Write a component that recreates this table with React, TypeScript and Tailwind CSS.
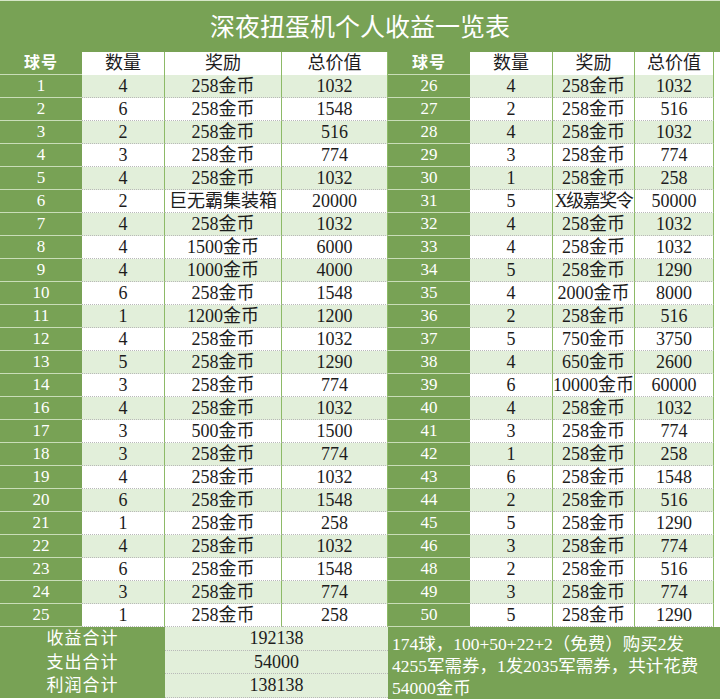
type Row = { no: number; qty: number; prize: string; total: number };

const left: Row[] = [
  { no: 1, qty: 4, prize: "258金币", total: 1032 },
  { no: 2, qty: 6, prize: "258金币", total: 1548 },
  { no: 3, qty: 2, prize: "258金币", total: 516 },
  { no: 4, qty: 3, prize: "258金币", total: 774 },
  { no: 5, qty: 4, prize: "258金币", total: 1032 },
  { no: 6, qty: 2, prize: "巨无霸集装箱", total: 20000 },
  { no: 7, qty: 4, prize: "258金币", total: 1032 },
  { no: 8, qty: 4, prize: "1500金币", total: 6000 },
  { no: 9, qty: 4, prize: "1000金币", total: 4000 },
  { no: 10, qty: 6, prize: "258金币", total: 1548 },
  { no: 11, qty: 1, prize: "1200金币", total: 1200 },
  { no: 12, qty: 4, prize: "258金币", total: 1032 },
  { no: 13, qty: 5, prize: "258金币", total: 1290 },
  { no: 14, qty: 3, prize: "258金币", total: 774 },
  { no: 16, qty: 4, prize: "258金币", total: 1032 },
  { no: 17, qty: 3, prize: "500金币", total: 1500 },
  { no: 18, qty: 3, prize: "258金币", total: 774 },
  { no: 19, qty: 4, prize: "258金币", total: 1032 },
  { no: 20, qty: 6, prize: "258金币", total: 1548 },
  { no: 21, qty: 1, prize: "258金币", total: 258 },
  { no: 22, qty: 4, prize: "258金币", total: 1032 },
  { no: 23, qty: 6, prize: "258金币", total: 1548 },
  { no: 24, qty: 3, prize: "258金币", total: 774 },
  { no: 25, qty: 1, prize: "258金币", total: 258 },
];

const right: Row[] = [
  { no: 26, qty: 4, prize: "258金币", total: 1032 },
  { no: 27, qty: 2, prize: "258金币", total: 516 },
  { no: 28, qty: 4, prize: "258金币", total: 1032 },
  { no: 29, qty: 3, prize: "258金币", total: 774 },
  { no: 30, qty: 1, prize: "258金币", total: 258 },
  { no: 31, qty: 5, prize: "X级嘉奖令", total: 50000 },
  { no: 32, qty: 4, prize: "258金币", total: 1032 },
  { no: 33, qty: 4, prize: "258金币", total: 1032 },
  { no: 34, qty: 5, prize: "258金币", total: 1290 },
  { no: 35, qty: 4, prize: "2000金币", total: 8000 },
  { no: 36, qty: 2, prize: "258金币", total: 516 },
  { no: 37, qty: 5, prize: "750金币", total: 3750 },
  { no: 38, qty: 4, prize: "650金币", total: 2600 },
  { no: 39, qty: 6, prize: "10000金币", total: 60000 },
  { no: 40, qty: 4, prize: "258金币", total: 1032 },
  { no: 41, qty: 3, prize: "258金币", total: 774 },
  { no: 42, qty: 1, prize: "258金币", total: 258 },
  { no: 43, qty: 6, prize: "258金币", total: 1548 },
  { no: 44, qty: 2, prize: "258金币", total: 516 },
  { no: 45, qty: 5, prize: "258金币", total: 1290 },
  { no: 46, qty: 3, prize: "258金币", total: 774 },
  { no: 48, qty: 2, prize: "258金币", total: 516 },
  { no: 49, qty: 3, prize: "258金币", total: 774 },
  { no: 50, qty: 5, prize: "258金币", total: 1290 },
];

const font = "font-['Liberation_Serif','Noto_Sans_CJK_SC',serif]";
const noCell = "flex shrink-0 items-center justify-center border-b border-[#c9ddb8] bg-[#78a255] text-[17px] text-white";
const dataCell =
  "flex shrink-0 items-center justify-center overflow-hidden whitespace-nowrap border-r border-b border-r-[#8dba67] border-b-[#b9b9b9] [border-bottom-style:dotted] text-[18px] text-[#1c1c1c]";

function Half({ row, shade, last }: { row: Row; shade: string; last?: boolean }) {
  // 奖励 text that is too long for the narrow right column gets squeezed a bit
  const tight = last && row.prize.length > 4 && !row.prize.includes("金币") ? "tracking-[-1.5px]" : "";
  return (
    <>
      <div className={`${noCell} w-[82px]`}>{row.no}</div>
      <div className={`${dataCell} ${shade} w-[83px]`}>{row.qty}</div>
      <div className={`${dataCell} ${shade} ${tight} ${last ? "w-[82px]" : "w-[117px]"}`}>{row.prize}</div>
      <div className={`${dataCell} ${shade} ${last ? "w-[79px]" : "w-[106px]"}`}>{row.total}</div>
    </>
  );
}

function HeadHalf({ last }: { last?: boolean }) {
  const head = "flex shrink-0 items-center justify-center border-r border-[#8dba67] bg-white text-[18px] text-[#1c1c1c]";
  return (
    <>
      <div className="flex w-[82px] shrink-0 items-center justify-center border-b border-[#c9ddb8] bg-[#78a255] text-[16px] font-bold tracking-[1px] text-white">
        球号
      </div>
      <div className={`${head} w-[83px]`}>数量</div>
      <div className={`${head} ${last ? "w-[82px]" : "w-[117px]"}`}>奖励</div>
      <div className={`${head} ${last ? "w-[79px]" : "w-[106px]"}`}>总价值</div>
    </>
  );
}

export default function App() {
  const sums = [
    { label: "收益合计", value: "192138", h: "h-[24px]" },
    { label: "支出合计", value: "54000", h: "h-[23px]" },
    { label: "利润合计", value: "138138", h: "h-[24px]" },
  ];

  return (
    <div className={`h-[699px] w-[720px] overflow-hidden bg-white ${font}`}>
      <div className="flex h-[52px] items-center justify-center border-t border-[#d6e6c8] bg-[#78a255] pt-[2px] text-[25px] text-white">
        深夜扭蛋机个人收益一览表
      </div>

      <div className="flex h-[23px]">
        <HeadHalf />
        <HeadHalf last />
        <div className="w-[6px] bg-white" />
      </div>

      {left.map((row, i) => {
        const shade = i % 2 === 0 ? "bg-[#e2efda]" : "bg-white";
        return (
          <div key={row.no} className="flex h-[23px]">
            <Half row={row} shade={shade} />
            <Half row={right[i]} shade={shade} last />
            <div className="w-[6px] bg-white" />
          </div>
        );
      })}

      <div className="flex">
        <div className="flex w-[388px] flex-col">
          {sums.map((s) => (
            <div key={s.label} className={`flex ${s.h}`}>
              <div className="flex w-[165px] items-center justify-center bg-[#78a255] text-[17px] tracking-[1px] text-white">
                {s.label}
              </div>
              <div className="flex w-[223px] items-center justify-center border-b border-[#b9b9b9] border-dotted bg-[#e2efda] text-[18px] text-[#1c1c1c]">
                {s.value}
              </div>
            </div>
          ))}
        </div>
        <div className="w-[332px] bg-[#78a255] pl-[4px] pt-[6px] text-[17.5px] leading-[22px] text-white">
          174球，100+50+22+2（免费）购买2发
          <br />
          4255军需券，1发2035军需券，共计花费
          <br />
          54000金币
        </div>
      </div>
    </div>
  );
}
